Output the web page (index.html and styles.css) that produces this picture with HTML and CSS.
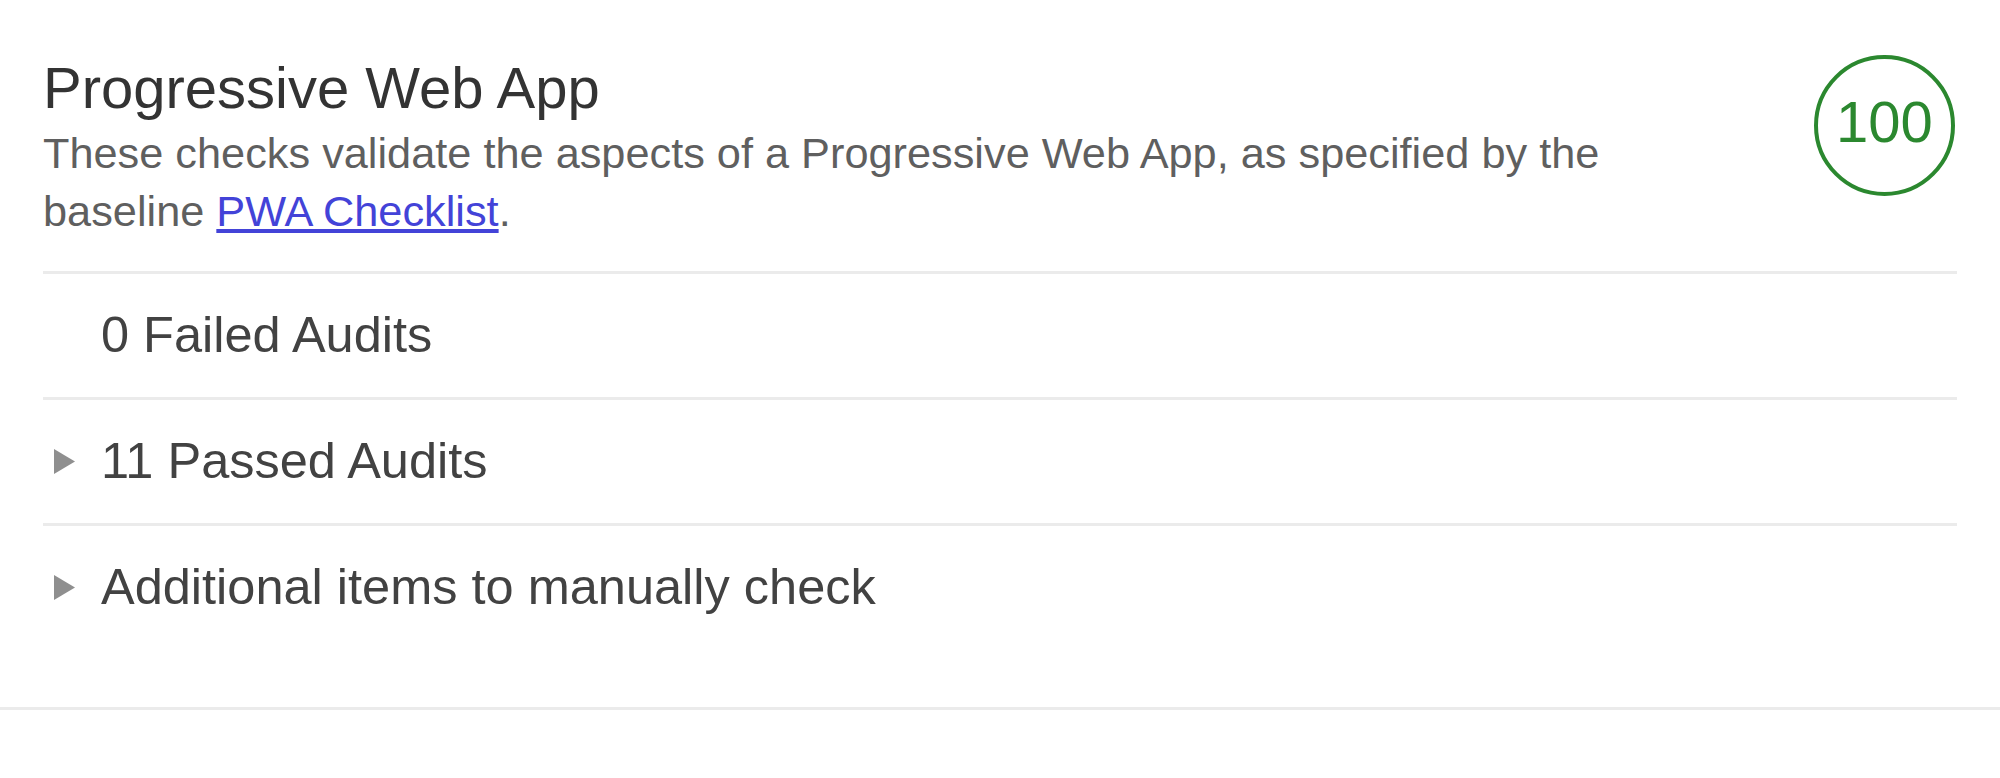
FILE: index.html
```html
<!DOCTYPE html>
<html lang="en">
<head>
<meta charset="utf-8">
<title>Progressive Web App</title>
<link rel="stylesheet" href="styles.css">
</head>
<body>
<section class="category">
  <div class="header">
    <div class="header-text">
      <h2 class="title">Progressive Web App</h2>
      <p class="desc">These checks validate the aspects of a Progressive Web App, as specified by the baseline <a href="#" class="link">PWA Checklist</a>.</p>
    </div>
    <div class="gauge"><span class="gauge-value">100</span></div>
  </div>
  <div class="group">
    <span class="marker"></span>
    <span class="group-label">0 Failed Audits</span>
  </div>
  <div class="group">
    <span class="marker"><svg class="tri" width="21" height="25" viewBox="0 0 21 25"><polygon points="0,0 21,12.5 0,25"/></svg></span>
    <span class="group-label">11 Passed Audits</span>
  </div>
  <div class="group">
    <span class="marker"><svg class="tri" width="21" height="25" viewBox="0 0 21 25"><polygon points="0,0 21,12.5 0,25"/></svg></span>
    <span class="group-label">Additional items to manually check</span>
  </div>
</section>
</body>
</html>
```

FILE: styles.css
```css
html, body {
  margin: 0;
  padding: 0;
  background: #ffffff;
}

body {
  font-family: "Liberation Sans", Arial, Helvetica, sans-serif;
  color: #212121;
}

.category {
  padding: 51px 43px 58px;
  border-bottom: 3px solid #ebebeb;
}

.header {
  display: flex;
  align-items: flex-start;
  gap: 110px;
  padding-bottom: 31px;
}

.header-text {
  flex: 1;
  min-width: 0;
}

.title {
  margin: 0;
  font-size: 58px;
  line-height: 73px;
  font-weight: normal;
  color: #333333;
}

.desc {
  margin: 0;
  font-size: 43.3px;
  line-height: 58px;
  color: #5f5f5f;
}

.link {
  color: #4343d8;
  text-decoration: underline;
}

.gauge {
  flex: none;
  width: 141px;
  height: 141px;
  box-sizing: border-box;
  margin-top: 4px;
  margin-right: 2px;
  padding-bottom: 8px;
  border: 4px solid #2b882f;
  border-radius: 50%;
  display: flex;
  align-items: center;
  justify-content: center;
}

.gauge-value {
  font-size: 58px;
  line-height: 1;
  color: #2b882f;
}

.group {
  display: flex;
  align-items: center;
  border-top: 3px solid #ebebeb;
  padding: 32px 0 33px;
  font-size: 50.5px;
  line-height: 58px;
  color: #424242;
}

.marker {
  flex: none;
  width: 58px;
  display: flex;
  align-items: center;
}

.tri {
  display: block;
  margin-left: 11px;
  fill: #8f8f8f;
}
```
